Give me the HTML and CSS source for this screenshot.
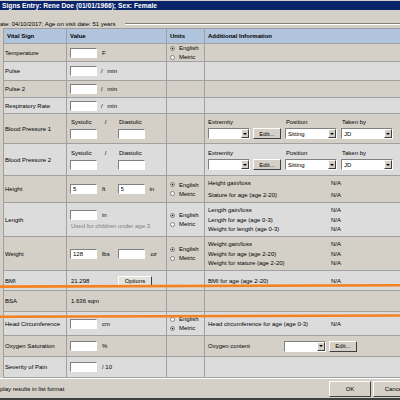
FILE: index.html
```html
<!DOCTYPE html>
<html lang="en">
<head>
  <meta charset="UTF-8" />
  <title>Vital Signs Entry</title>
  <link rel="stylesheet" href="styles.css">
</head>
<body>

  <div class="dialog">
    <div class="titlebar">Signs Entry: Rene Doe (01/01/1966); Sex: Female</div>
    <div class="infobar">
      <span class="visit">ate: 04/10/2017; Age on visit date: 51 years</span>
      <span class="rule"></span>
    </div>

    <div class="grid">
      <div class="row head">
        <div class="cell sign">Vital Sign</div>
        <div class="cell value">Value</div>
        <div class="cell units">Units</div>
        <div class="cell info">Additional Information</div>
      </div>

      <div class="row r-temp">
        <div class="cell sign">Temperature</div>
        <div class="cell value"><input class="field" type="text"><span class="unit">F</span></div>
        <div class="cell units">
          <div class="radios">
            <span class="radio on"><i></i>English</span>
            <span class="radio"><i></i>Metric</span>
          </div>
        </div>
        <div class="cell info"></div>
      </div>

      <div class="row r-pulse">
        <div class="cell sign">Pulse</div>
        <div class="cell value"><input class="field" type="text"><span class="unit per">/ min</span></div>
        <div class="cell units"></div>
        <div class="cell info"></div>
      </div>

      <div class="row r-pulse2">
        <div class="cell sign">Pulse 2</div>
        <div class="cell value"><input class="field" type="text"><span class="unit per">/ min</span></div>
        <div class="cell units"></div>
        <div class="cell info"></div>
      </div>

      <div class="row r-resp">
        <div class="cell sign">Respiratory Rate</div>
        <div class="cell value"><input class="field" type="text"><span class="unit per">/ min</span></div>
        <div class="cell units"></div>
        <div class="cell info"></div>
      </div>

      <div class="row r-bp1">
        <div class="cell sign">Blood Pressure 1</div>
        <div class="cell value">
          <div class="stack">
            <div class="pair"><span class="slot cap">Systolic<em>/</em></span><span class="slot cap">Diastolic</span></div>
            <div class="pair"><span class="slot"><input class="field" type="text"></span><span class="slot"><input class="field" type="text"></span></div>
          </div>
        </div>
        <div class="cell units"></div>
        <div class="cell info">
          <div class="controls">
            <div class="group">
              <span class="cap">Extremity</span>
              <div class="inline">
                <span class="select"><span></span><b></b></span>
                <span class="btn edit">Edit...</span>
              </div>
            </div>
            <div class="group pos">
              <span class="cap">Position</span>
              <span class="select wide"><span>Sitting</span><b></b></span>
            </div>
            <div class="group who">
              <span class="cap">Taken by</span>
              <span class="select wide"><span>JD</span><b></b></span>
            </div>
          </div>
        </div>
      </div>

      <div class="row r-bp2">
        <div class="cell sign">Blood Pressure 2</div>
        <div class="cell value">
          <div class="stack">
            <div class="pair"><span class="slot cap">Systolic<em>/</em></span><span class="slot cap">Diastolic</span></div>
            <div class="pair"><span class="slot"><input class="field" type="text"></span><span class="slot"><input class="field" type="text"></span></div>
          </div>
        </div>
        <div class="cell units"></div>
        <div class="cell info">
          <div class="controls">
            <div class="group">
              <span class="cap">Extremity</span>
              <div class="inline">
                <span class="select"><span></span><b></b></span>
                <span class="btn edit">Edit...</span>
              </div>
            </div>
            <div class="group pos">
              <span class="cap">Position</span>
              <span class="select wide"><span>Sitting</span><b></b></span>
            </div>
            <div class="group who">
              <span class="cap">Taken by</span>
              <span class="select wide"><span>JD</span><b></b></span>
            </div>
          </div>
        </div>
      </div>

      <div class="row r-height">
        <div class="cell sign">Height</div>
        <div class="cell value">
          <span class="slot"><input class="field" type="text" value="5"><span class="unit">ft</span></span>
          <span class="slot"><input class="field" type="text" value="5"><span class="unit">in</span></span>
        </div>
        <div class="cell units">
          <div class="radios">
            <span class="radio on"><i></i>English</span>
            <span class="radio"><i></i>Metric</span>
          </div>
        </div>
        <div class="cell info">
          <div class="lines loose">
            <div class="line"><span>Height gain/loss</span>N/A</div>
            <div class="line"><span>Stature for age (age 2-20)</span>N/A</div>
          </div>
        </div>
      </div>

      <div class="row r-length">
        <div class="cell sign">Length</div>
        <div class="cell value">
          <div class="stack">
            <div class="pair"><input class="field" type="text"><span class="unit">in</span></div>
            <span class="hint">Used for children under age 3</span>
          </div>
        </div>
        <div class="cell units">
          <div class="radios">
            <span class="radio on"><i></i>English</span>
            <span class="radio"><i></i>Metric</span>
          </div>
        </div>
        <div class="cell info">
          <div class="lines">
            <div class="line"><span>Length gain/loss</span>N/A</div>
            <div class="line"><span>Length for age (age 0-3)</span>N/A</div>
            <div class="line"><span>Weight for length (age 0-3)</span>N/A</div>
          </div>
        </div>
      </div>

      <div class="row r-weight">
        <div class="cell sign">Weight</div>
        <div class="cell value">
          <span class="slot"><input class="field" type="text" value="128"><span class="unit">lbs</span></span>
          <span class="slot"><input class="field" type="text"><span class="unit oz">oz</span></span>
        </div>
        <div class="cell units">
          <div class="radios">
            <span class="radio on"><i></i>English</span>
            <span class="radio"><i></i>Metric</span>
          </div>
        </div>
        <div class="cell info">
          <div class="lines">
            <div class="line"><span>Weight gain/loss</span>N/A</div>
            <div class="line"><span>Weight for age (age 2-20)</span>N/A</div>
            <div class="line"><span>Weight for stature (age 2-20)</span>N/A</div>
          </div>
        </div>
      </div>

      <div class="row r-bmi">
        <div class="cell sign">BMI</div>
        <div class="cell value">
          <span class="slot result">21.298</span>
          <span class="btn options">Options</span>
        </div>
        <div class="cell units"></div>
        <div class="cell info">
          <div class="lines">
            <div class="line"><span>BMI for age (age 2-20)</span>N/A</div>
          </div>
        </div>
      </div>

      <div class="row r-bsa">
        <div class="cell sign">BSA</div>
        <div class="cell value"><span class="result">1.636 sqm</span></div>
        <div class="cell units"></div>
        <div class="cell info"></div>
      </div>

      <div class="row r-head">
        <div class="cell sign">Head Circumference</div>
        <div class="cell value"><input class="field" type="text"><span class="unit">cm</span></div>
        <div class="cell units">
          <div class="radios">
            <span class="radio"><i></i>English</span>
            <span class="radio on"><i></i>Metric</span>
          </div>
        </div>
        <div class="cell info">
          <div class="lines">
            <div class="line"><span>Head circumference for age (age 0-3)</span>N/A</div>
          </div>
        </div>
      </div>

      <div class="row r-oxy">
        <div class="cell sign">Oxygen Saturation</div>
        <div class="cell value"><input class="field" type="text"><span class="unit">%</span></div>
        <div class="cell units"></div>
        <div class="cell info">
          <span class="oxy-label">Oxygen content</span>
          <span class="select"><span></span><b></b></span>
          <span class="btn edit">Edit...</span>
        </div>
      </div>

      <div class="row r-pain">
        <div class="cell sign">Severity of Pain</div>
        <div class="cell value"><input class="field" type="text"><span class="unit">/ 10</span></div>
        <div class="cell units"></div>
        <div class="cell info"></div>
      </div>
    </div>

    <div class="footer">
      <span class="listfmt">play results in list format</span>
      <span class="btn big">OK</span>
      <span class="btn big">Cancel</span>
    </div>
  </div>

  <!-- review marks drawn over the screenshot -->
  <svg class="marks" width="400" height="400" viewBox="0 0 400 400">
    <line x1="0" y1="286.6" x2="400" y2="285.3" stroke="#f5821f" stroke-width="2.6"/>
    <line x1="0" y1="316.7" x2="400" y2="315.5" stroke="#f5821f" stroke-width="2.6"/>
  </svg>

</body>
</html>
```

FILE: styles.css
```css
* {
  margin: 0;
  padding: 0;
  box-sizing: border-box;
}

body {
  width: 400px;
  height: 400px;
  overflow: hidden;
  position: relative;
  background: #d4d0c8;
  font-family: 'Liberation Sans', Arial, sans-serif;
  font-size: 6px;
  color: #000;
}

.dialog {
  width: 440px;
  padding-top: 1px;
}

.titlebar {
  height: 9px;
  line-height: 9px;
  padding-left: 2px;
  background: #0a246a;
  color: #fff;
  font-weight: bold;
  font-size: 6.7px;
  white-space: nowrap;
}

.infobar {
  height: 18px;
  padding-top: 9px;
  display: flex;
  align-items: center;
  white-space: nowrap;
}

.rule {
  flex: 1;
  height: 2px;
  margin-left: 10px;
  border-top: 1px solid #808080;
  border-bottom: 1px solid #fff;
}

.grid {
  width: 437px;
  margin-left: 3px;
  border-left: 1px solid #a0a0a0;
}

.row {
  display: grid;
  grid-template-columns: 63px 100px 38px 1fr;
  border-bottom: 1px solid #a0a0a0;
  background: #dcdcdc;
}

.row:nth-child(even) {
  background: #d4d0c8;
}

.row.head {
  height: 16px;
  background: #b0c4de;
  border-top: 1px solid #a0a0a0;
  font-weight: bold;
}

.r-temp   { height: 18px; }
.r-pulse  { height: 19px; }
.r-pulse2 { height: 17px; }
.r-resp   { height: 16px; }
.r-bp1    { height: 30px; }
.r-bp2    { height: 32px; }
.r-height { height: 27px; }
.r-length { height: 34px; }
.r-weight { height: 34px; }
.r-bmi    { height: 20px; }
.r-bsa    { height: 21px; }
.r-head   { height: 24px; }
.r-oxy    { height: 21px; }
.r-pain   { height: 21px; }

.cell {
  display: flex;
  align-items: center;
  padding-left: 3px;
  border-right: 1px solid #a0a0a0;
  white-space: nowrap;
  overflow: hidden;
}

.cell.sign {
  padding-left: 1px;
}

.head .cell.sign {
  padding-left: 3px;
}

.cell.info {
  border-right: none;
}

.field {
  width: 27px;
  height: 10px;
  padding: 0 2px;
  border: 1px solid;
  border-color: #808080 #fff #fff #808080;
  background: #fff;
  font: inherit;
  outline: none;
}

.unit {
  margin-left: 5px;
}

.unit.per {
  margin-left: 4px;
  word-spacing: 3px;
}

.unit.oz {
  margin-left: 6px;
}

.stack {
  display: flex;
  flex-direction: column;
}

.pair {
  display: flex;
  align-items: center;
}

.slot {
  width: 48px;
  display: flex;
  align-items: center;
}

.slot.cap {
  line-height: 8px;
  margin-bottom: 3px;
  padding-left: 1px;
}

.slot.cap em {
  font-style: normal;
  margin-left: 13px;
}

.slot + .slot {
  width: 49px;
}

.hint {
  margin-top: 2px;
  line-height: 8px;
  padding-left: 1px;
  color: #808080;
}

.result {
  padding-left: 1px;
}

.radios {
  display: flex;
  flex-direction: column;
}

.radio {
  display: flex;
  align-items: center;
  height: 9px;
}

.radio i {
  width: 5px;
  height: 5px;
  margin-right: 4px;
  border-radius: 50%;
  border: 1px solid #808080;
  background: #fff;
}

.radio.on i {
  background: radial-gradient(circle, #000 0 40%, #fff 50%);
}

.lines {
  display: flex;
  flex-direction: column;
}

.lines.loose {
  gap: 2px;
}

.line {
  display: flex;
  height: 9.5px;
  align-items: center;
}

.line span {
  width: 123px;
}

.controls {
  display: flex;
  align-items: flex-start;
}

.group {
  display: flex;
  flex-direction: column;
}

.group .cap {
  line-height: 8px;
  margin-bottom: 2px;
}

.group.pos {
  margin-left: 4px;
}

.group.pos .cap,
.group.who .cap {
  padding-left: 1px;
}

.group.who {
  margin-left: 4px;
}

.inline {
  display: flex;
  align-items: center;
}

.select {
  width: 42px;
  height: 11px;
  display: flex;
  align-items: center;
  background: #fff;
  border: 1px solid;
  border-color: #808080 #fff #fff #808080;
}

.select.wide {
  width: 52px;
}

.select span {
  flex: 1;
  padding-left: 2px;
}

.select b {
  width: 8px;
  height: 9px;
  display: flex;
  align-items: center;
  justify-content: center;
  background: #d4d0c8;
  border: 1px solid;
  border-color: #fff #404040 #404040 #fff;
}

.select b::after {
  content: '';
  border-left: 2px solid transparent;
  border-right: 2px solid transparent;
  border-top: 2px solid #000;
}

.btn {
  height: 11px;
  display: flex;
  align-items: center;
  justify-content: center;
  background: #d4d0c8;
  border: 1px solid;
  border-color: #fff #404040 #404040 #fff;
}

.btn.edit {
  width: 28px;
  margin-left: 2px;
}

.btn.options {
  width: 34px;
  height: 10px;
  background: #e4e2dc;
}

.oxy-label {
  width: 76px;
}

.select + .btn.edit {
  margin-left: 3px;
}

.footer {
  height: 22px;
  display: flex;
  align-items: center;
  padding-right: 25px;
  border-top: 1px solid #fff;
  border-bottom: 2px solid #404040;
}

.listfmt {
  flex: 1;
}

.btn.big {
  width: 42px;
  height: 16px;
  margin-left: 2px;
}

.marks {
  position: absolute;
  top: 0;
  left: 0;
  pointer-events: none;
}
```
